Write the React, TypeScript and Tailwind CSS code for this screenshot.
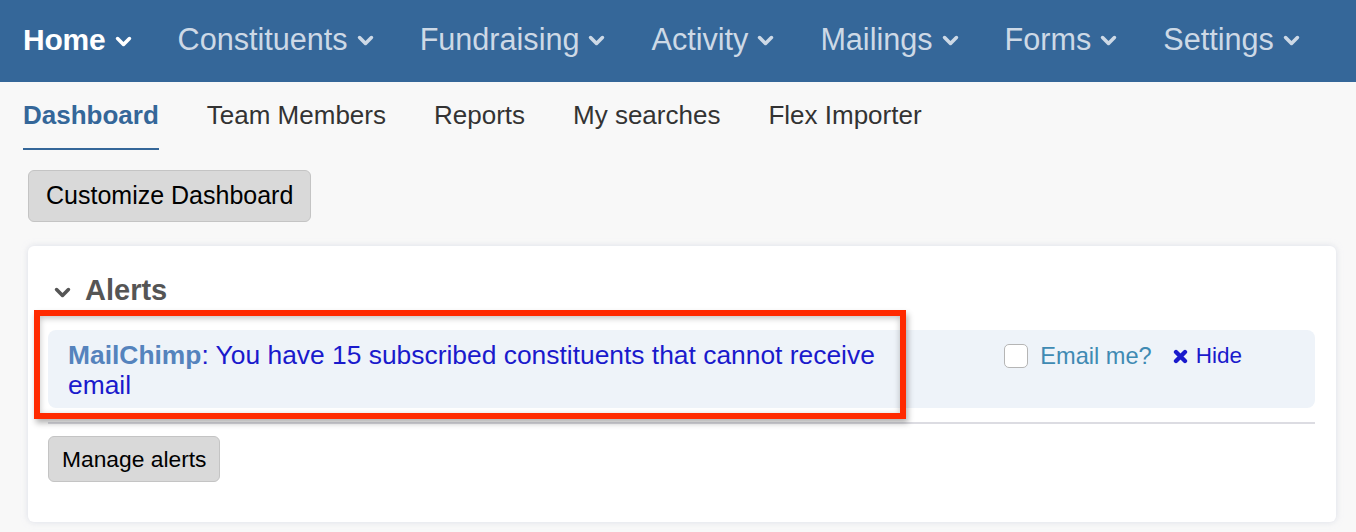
import React from 'react';

const navItems = ['Home', 'Constituents', 'Fundraising', 'Activity', 'Mailings', 'Forms', 'Settings'];
const tabs = ['Dashboard', 'Team Members', 'Reports', 'My searches', 'Flex Importer'];

const Chevron = ({ className }: { className?: string }) => (
  <svg viewBox="0 0 16 16" className={className} fill="none" stroke="currentColor" strokeWidth="3" strokeLinecap="round" strokeLinejoin="round">
    <path d="M3 5.5l5 5 5-5" />
  </svg>
);

const App: React.FC = () => {
  return (
    <div className="w-[1356px] h-[532px] bg-[#f8f8f8] overflow-hidden font-['Liberation_Sans',Arial,sans-serif]">
      {/* Top nav */}
      <div className="h-[82px] bg-[#356799] flex items-center pl-[23px] pb-[3px] gap-[45px]">
        {navItems.map((item, i) => (
          <div
            key={item}
            className={`flex items-center gap-[8px] ${i === 0 ? 'text-[30px] tracking-[-0.2px] text-white font-bold' : 'text-[30.6px] text-[#cdd9e6]'}`}
          >
            <span>{item}</span>
            <Chevron className="w-[19px] h-[19px] mt-[3px]" />
          </div>
        ))}
      </div>

      {/* Sub tabs */}
      <div className="flex pl-[23px] gap-[48px] h-[68px]">
        {tabs.map((tab, i) => (
          <div
            key={tab}
            className={`pt-[18px] text-[26px] leading-[30px] ${i === 0 ? 'text-[#356799] font-bold border-b-2 border-[#356799] h-[68px]' : 'text-[#333]'}`}
          >
            {tab}
          </div>
        ))}
      </div>

      <div className="px-[28px] pt-[20px]">
        <button className="h-[52px] px-[17px] bg-[#d9d9d9] border border-[#c4c4c4] rounded-[6px] text-[25px] text-black">
          Customize Dashboard
        </button>

        {/* Card */}
        <div className="mt-[24px] mr-[-8px] bg-white rounded-[6px] shadow-[0_0_6px_rgba(200,205,220,0.6)] h-[276px] pl-[20px] pr-[21px] pt-[27px]">
          <div className="flex items-center gap-[13px] pl-[5px]">
            <Chevron className="w-[19px] h-[19px] text-[#555] mt-[4px]" />
            <h3 className="text-[29px] leading-[34px] font-bold text-[#555]">Alerts</h3>
          </div>

          <div className="relative mt-[23px]">
            <div className="bg-[#eef3f9] rounded-[8px] h-[78px] flex justify-between pl-[20px] pr-[73px] pt-[10px]">
              <p className="text-[26.4px] leading-[30px] text-[#1a1acc] w-[840px]">
                <span className="font-bold text-[#5583bd]">MailChimp</span>: You have 15 subscribed constituents that cannot receive email
              </p>
              <div className="flex items-start gap-[21px] pt-[1px]">
                <label className="flex items-center gap-[12px] text-[23.6px] leading-[30px] text-[#3f8ab3]">
                  <span className="w-[24px] h-[24px] bg-white border border-[#b5b5b5] rounded-[5px]" />
                  Email me?
                </label>
                <span className="flex items-center gap-[8px] text-[22.5px] leading-[30px] text-[#1a1acc]">
                  <svg viewBox="0 0 16 16" className="w-[15px] h-[15px]" fill="none" stroke="currentColor" strokeWidth="4.6" strokeLinecap="round">
                    <path d="M3.2 3.2l9.6 9.6M12.8 3.2l-9.6 9.6" />
                  </svg>
                  Hide
                </span>
              </div>
            </div>

            {/* red highlight annotation */}
            <div className="absolute left-[-14px] top-[-20px] w-[872px] h-[109px] border-[6px] border-[#ff2a00] shadow-[2px_4px_6px_rgba(0,0,0,0.3),inset_0_2px_6px_rgba(0,0,0,0.25)] pointer-events-none" />
          </div>

          <div className="mt-[14px] border-t-2 border-[#dcdce2]" />

          <button className="mt-[12px] h-[46px] px-[13px] bg-[#d9d9d9] border border-[#c4c4c4] rounded-[6px] text-[22.8px] text-black">
            Manage alerts
          </button>
        </div>
      </div>
    </div>
  );
};

export default App;
